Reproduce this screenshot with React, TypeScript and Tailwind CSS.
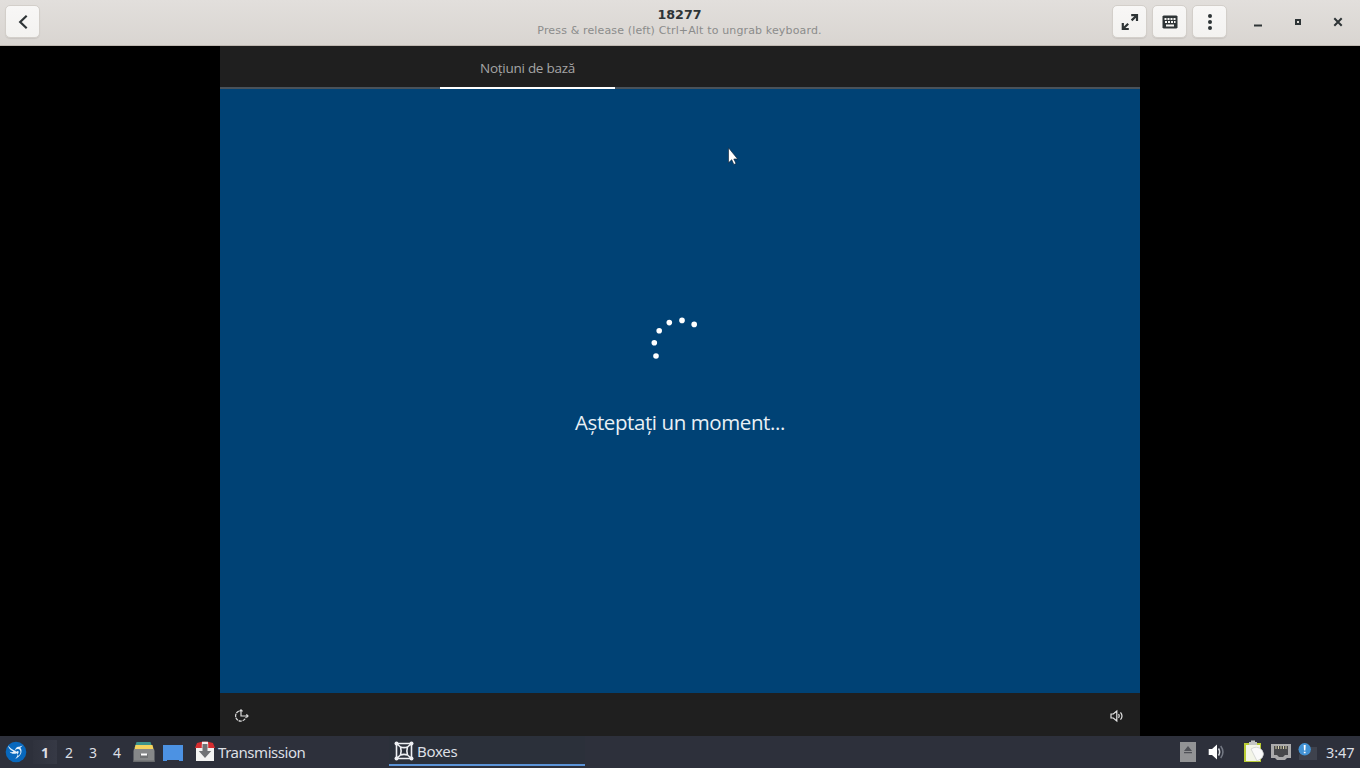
import type { ReactNode } from 'react'

const spinnerDots = [
  [656, 356],
  [654.3, 342.7],
  [659.2, 330.8],
  [669.3, 322.6],
  [682, 320.4],
  [694.2, 324.4],
]

function HeaderButton({ label, children }: { label: string; children: ReactNode }) {
  return (
    <button
      aria-label={label}
      className="flex h-[33px] w-[35px] items-center justify-center rounded-[5px] border border-[#d3cfca] bg-linear-to-b from-[#f8f7f6] to-[#f3f2f0] shadow-[0_1px_1px_rgba(0,0,0,0.08)]"
    >
      {children}
    </button>
  )
}

function TitleBar() {
  return (
    <header className="grid h-[46px] grid-cols-[269px_1fr_269px] border-b border-[#bfb8b1] bg-linear-to-b from-[#e2dfdc] to-[#d9d5d1] font-['DejaVu_Sans',sans-serif]">
      <div className="pt-[5px] pl-[5px]">
        <div className="w-9">
          <HeaderButton label="Back">
            <svg width="16" height="16" viewBox="0 0 16 16" fill="none" stroke="#2e3436" strokeWidth="2.2">
              <path d="M11.7 1.8 5.2 8l6.5 6.2" />
            </svg>
          </HeaderButton>
        </div>
      </div>

      <div className="flex flex-col items-center pt-[7px] text-center">
        <h1 className="pr-px text-[12.7px] leading-[15px] font-bold text-[#2e3436]">18277</h1>
        <p className="pt-[2px] pr-px text-[11px] leading-[14px] tracking-[0.145px] whitespace-nowrap text-[#8b8c8b]">
          Press &amp; release (left) Ctrl+Alt to ungrab keyboard.
        </p>
      </div>

      <div className="flex justify-end pt-[5px] pr-[14px]">
        <div className="flex gap-[5px] pr-[23px]">
          <HeaderButton label="Fullscreen">
            <svg width="18" height="18" viewBox="0 0 18 18" fill="none" stroke="#2e3436" strokeWidth="2.2">
              <path d="M10.2 2.2H16V8M16 2.2 10.6 7.4M1.8 10v6h6M1.8 16l5.4-5.2" />
            </svg>
          </HeaderButton>
          <HeaderButton label="Keyboard">
            <svg width="16" height="16" viewBox="0 0 16 16">
              <path fill="#2e3436" d="M1.5 1.5h13l1 1v11l-1 1h-13l-1-1v-11z" />
              <path
                fill="#f5f4f2"
                d="M2.5 4h2v2h-2zM5.5 4h2v2h-2zM8.5 4h2v2h-2zM11.5 4h2v2h-2zM3 7h2v2H3zM6 7h2v2H6zM9 7h2v2H9zM12 7h1.5v2H12zM4 10.5h8v2H4z"
              />
            </svg>
          </HeaderButton>
          <HeaderButton label="Menu">
            <svg width="16" height="16" viewBox="0 0 16 16" fill="#2e3436">
              <circle cx="8" cy="2" r="2" />
              <circle cx="8" cy="8" r="2" />
              <circle cx="8" cy="14" r="2" />
            </svg>
          </HeaderButton>
        </div>
        <div className="flex h-[33px] items-center gap-6">
          <svg width="16" height="16" viewBox="0 0 16 16" fill="#2e3436">
            <path d="M4 10.5h8v2H4z" />
          </svg>
          <svg width="16" height="16" viewBox="0 0 16 16" fill="none" stroke="#2e3436" strokeWidth="2">
            <path d="M6 6h4v4H6z" />
          </svg>
          <svg width="16" height="16" viewBox="0 0 16 16" fill="none" stroke="#2e3436" strokeWidth="2">
            <path d="m4.3 4.3 7.4 7.4M11.7 4.3l-7.4 7.4" />
          </svg>
        </div>
      </div>
    </header>
  )
}

function Cursor() {
  return (
    <svg className="absolute top-[101px] left-[508px]" width="12" height="20" viewBox="0 0 12 20">
      <path
        d="M.5.8v15l3.2-3.1 2.2 4.8 2.1-1-2.2-4.5h3.8z"
        fill="#fff"
        stroke="#0a1c30"
        strokeWidth=".6"
      />
    </svg>
  )
}

function GuestDisplay() {
  return (
    <main className="flex h-[690px] justify-center bg-black">
      <div className="relative flex w-[920px] flex-col bg-[#004275] font-['Open_Sans','Noto_Sans',sans-serif]">
        <div className="flex h-[43px] border-b-2 border-[#49525a] bg-[#1f1f1f] pl-[220px]">
          <div className="h-[43px] w-[175px] border-b-2 border-white pt-[13px] text-center text-[13.5px] leading-[19px] tracking-[-0.27px] whitespace-nowrap text-[#a5a5a5]">
            Noțiuni de bază
          </div>
        </div>

        <div className="flex flex-1 flex-col items-center pt-[223px]">
          <svg width="60" height="60" viewBox="650 312 60 60" fill="#fff">
            {spinnerDots.map(([cx, cy]) => (
              <circle key={cx} cx={cx} cy={cy} r="2.8" />
            ))}
          </svg>
          <p className="pt-[37px] text-[20.5px] leading-[27px] tracking-[-0.41px] whitespace-nowrap text-[#e9f0f5]">
            Așteptați un moment...
          </p>
        </div>

        <div className="flex h-[43px] items-center justify-between bg-[#1f1f1f] pt-[2px] pr-4 pl-[13px]">
          {/* Ease of access */}
          <svg width="17" height="16" viewBox="0 0 17 16" fill="none" stroke="#dcdcdc" strokeWidth="1.2">
            <path d="M5.8 3.1a5.2 5.2 0 1 0 7 6.2" strokeDasharray="3.2 .8" />
            <path d="M8 2v6h7M6.4 3.4 8 1.9l1.6 1.5M13.4 6.4 15 8l-1.6 1.6" />
          </svg>
          <svg width="14" height="14" viewBox="0 0 14 14" fill="none" stroke="#e5e5e5" strokeWidth="1.2">
            <path d="M1 5h2.3L6.8 2v10L3.3 9H1zM8.5 5.2q1.4 1.8 0 3.6M10.5 3.3q3 3.7 0 7.4" />
          </svg>
        </div>
        <Cursor />
      </div>
    </main>
  )
}

function Taskbar() {
  return (
    <footer className="flex h-8 bg-[#2d303b] font-['Noto_Sans',sans-serif] text-[15px] leading-8 text-[#dcdfe4]">
      <div className="flex w-[33px] items-center pl-[5px]">
        <svg width="22" height="22" viewBox="0 0 22 22">
          <circle cx="11" cy="11" r="10.3" fill="#0868bd" />
          <path
            d="M3 4.5c2.5 3.5 5 4 7.2 5.3C9.8 7.6 12 5.4 14.2 5.7l3.6-1.2-2.5 2.2c3.2 4-.2 8.8-5 11.3 2.2-3 3-4.5 1.5-5.7-2.8 1-5.5.7-7.2-1.5 1.8.5 3 .4 4-.1C5.8 9.4 3.5 7.4 3 4.5z"
            fill="#e4f1fb"
          />
          <path d="M10.5 10c3.8-2.8 5.4.8 2.6 4.2" stroke="#0868bd" strokeWidth="1.8" fill="none" />
        </svg>
      </div>
      <div className="flex py-1 text-center text-[14px] leading-[26px]">
        <span className="w-6 bg-linear-to-r from-[#2f323d] to-[#363945] font-bold">1</span>
        <span className="w-6">2</span>
        <span className="w-6">3</span>
        <span className="w-6">4</span>
      </div>
      <div className="flex w-[65px] items-center gap-[7px] pl-1">
        {/* File manager */}
        <svg width="22" height="24" viewBox="0 0 22 24">
          <path d="M3.5 2h14l2 6h-18z" fill="#3d948c" />
          <path d="M2.5 5h17l1.5 6H1z" fill="#f3d35e" />
          <path d="M1 9h20l.5 2v11H.5V11z" fill="#868889" />
          <path d="M.5 20.5h21V22H.5z" fill="#696b6d" />
          <path d="M7 14h8v4H7z" fill="#707274" />
          <path d="M8 13.5h6v2H8z" fill="#fff" />
        </svg>
        <svg className="mt-px" width="22" height="24" viewBox="0 0 22 24">
          <path d="M1 4h20v16h-4v-1H5v1H1z" fill="#4c92e3" />
        </svg>
      </div>

      <div className="flex w-[195px] items-center">
        <svg width="22" height="22" viewBox="0 0 22 22">
          <path d="M2 6h18v14H2z" fill="#f3f3f2" />
          <path d="M3 2q8-3 16 0l2 5H1z" fill="#d52d30" />
          <path d="M8 .7h6l.3 6H7.7z" fill="#f4eeee" />
          <path d="M8.5 3h5v7h3.7L11 17l-6.2-7h3.7z" fill="#707275" />
        </svg>
        <span className="pl-[2px] tracking-[-0.45px]">Transmission</span>
      </div>
      <div className="mb-[2px] flex w-[196px] items-center border-b-2 border-[#5b93d7] bg-[#2b303a] pt-[2px] pl-[5px] leading-[29px]">
        <svg width="20" height="20" viewBox="0 0 20 20" fill="none" stroke="#eef0f3" strokeWidth="1.6">
          <path d="M3 2.5h14M3 17.5h14M2.5 3v14M17.5 3v14M6.5 6q3.5 1.3 7 0-1.3 4 0 8-3.5-1.3-7 0 1.3-4 0-8zM2.5 2.5l4 3.5M17.5 2.5l-4 3.5M2.5 17.5l4-3.5M17.5 17.5l-4-3.5" />
          <g fill="#eef0f3" stroke="none">
            <circle cx="2.5" cy="2.5" r="2" />
            <circle cx="17.5" cy="2.5" r="2" />
            <circle cx="2.5" cy="17.5" r="2" />
            <circle cx="17.5" cy="17.5" r="2" />
          </g>
        </svg>
        <span className="pl-[3px] tracking-[-0.3px]">Boxes</span>
      </div>

      <div className="ml-auto flex items-center">
        <svg width="16" height="20" viewBox="0 0 16 20">
          <path fill="#929395" d="M0 0h16v20H0z" />
          <path fill="#505258" d="m8 4 4 5H4zM4 10h8v1.3H4z" />
        </svg>
        <svg className="ml-3" width="17" height="18" viewBox="0 0 17 18">
          <path d="M.7 6H4l5-4.5v15L4 12H.7z" fill="#fff" />
          <path d="M10.5 5.5q2.3 3.5 0 7" stroke="#d5d8dd" strokeWidth="1.5" fill="none" />
          <path d="M12.7 3q4.5 6 0 12" stroke="#747984" strokeWidth="1.5" fill="none" />
        </svg>
        {/* Clipboard */}
        <svg className="ml-[18px]" width="22" height="24" viewBox="0 0 22 24">
          <path d="M1 3h17v19H1z" fill="#b9cc35" />
          <path d="M3 5h14v16H3z" fill="#f3f5e8" />
          <path d="M6 2h2V.5h4V2h2v3H6z" fill="#c3c5c4" />
          <path d="M8 9q6-4 11 1 3 4 0 8l-5 3z" fill="#fafafa" stroke="#c9ccca" strokeWidth=".7" />
        </svg>
        <svg className="ml-[5px]" width="22" height="20" viewBox="0 0 22 20">
          <path d="M1 2h20v14h-4l-2 2H7l-2-2H1z" fill="#aaaaab" />
          <path d="M4 4h14v9h-3l-2 2H9l-2-2H4z" fill="#47484b" />
          <path d="M6 4v3M8.5 4v3M11 4v3M13.5 4v3M16 4v3" stroke="#d5cfab" />
        </svg>
        <svg className="ml-[6px]" width="20" height="20" viewBox="0 0 20 20">
          <path d="M6 5h13v13H1v-5z" fill="#3e424d" />
          <circle cx="6.7" cy="7.3" r="6.2" fill="#4292d4" />
          <path d="M5.7 3h2l-.3 5.5H6zM5.8 9.7h1.8v1.6H5.8z" fill="#fff" />
        </svg>
        <time className="ml-2 w-[34px] text-[14.5px] tracking-[-0.1px] whitespace-nowrap">3:47</time>
      </div>
    </footer>
  )
}

export default function App() {
  return (
    <div className="h-[768px] w-[1360px] overflow-hidden bg-black">
      <TitleBar />
      <GuestDisplay />
      <Taskbar />
    </div>
  )
}
